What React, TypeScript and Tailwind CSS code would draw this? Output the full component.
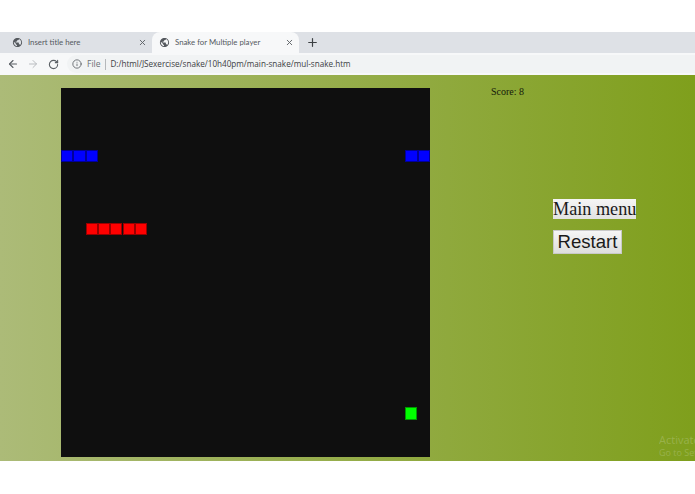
import React from 'react';
import { ArrowLeft, ArrowRight, Info, Plus, RotateCw, X } from 'lucide-react';

// board cells are 12.3px, 30 x 30
const CELL = 12.3;

const blue = [
  [0, 5.05],
  [1, 5.05],
  [2, 5.05],
  [28, 5.05],
  [29, 5.05],
];
const red = [
  [2, 10.97],
  [3, 10.97],
  [4, 10.97],
  [5, 10.97],
  [6, 10.97],
];

const Cell: React.FC<{ pos: number[]; color: string }> = ({ pos, color }) => (
  <div
    className={`absolute border border-black/40 ${color}`}
    style={{ left: pos[0] * CELL, top: pos[1] * CELL, width: CELL, height: CELL }}
  />
);

const Favicon = () => (
  <svg width="11" height="11" viewBox="0 0 24 24" className="shrink-0 fill-[#54585d]">
    <path d="M12 2C6.48 2 2 6.48 2 12s4.48 10 10 10 10-4.48 10-10S17.52 2 12 2zm-1 17.93c-3.95-.49-7-3.85-7-7.93 0-.62.08-1.21.21-1.79L9 15v1c0 1.1.9 2 2 2v1.93zm6.9-2.54c-.26-.81-1-1.39-1.9-1.39h-1v-3c0-.55-.45-1-1-1H8v-2h2c.55 0 1-.45 1-1V7h2c1.1 0 2-.9 2-2v-.41c2.93 1.19 5 4.06 5 7.41 0 2.08-.8 3.97-2.1 5.39z" />
  </svg>
);

const Tab: React.FC<{ title: string; active?: boolean }> = ({ title, active }) => (
  <div
    className={`flex h-[21px] w-[147px] items-center pl-[7px] pr-[5px] ${
      active ? 'rounded-t-lg bg-[#f7f8f9]' : ''
    }`}
  >
    <Favicon />
    <span className="ml-[5px] flex-1 truncate font-['Lato',sans-serif] text-[7.8px] text-[#55595f]">{title}</span>
    <X size={9} strokeWidth={2.5} className="shrink-0 text-[#5f6368]" />
  </div>
);

export default function App() {
  return (
    <div className="flex h-[494px] w-[695px] flex-col overflow-hidden bg-white font-['Open_Sans',sans-serif]">
      <div className="h-8 shrink-0 bg-white" />

      <div className="flex h-[21px] shrink-0 items-center bg-[#dee1e6] pl-[5px]">
        <Tab title="Insert title here" />
        <Tab title="Snake for Multiple player" active />
        <Plus size={13} strokeWidth={2.2} className="ml-[7px] text-[#3c4043]" />
      </div>

      <div className="flex h-[22px] shrink-0 items-center bg-[#f7f8f9] pl-[7px]">
        <ArrowLeft size={12} strokeWidth={2.2} className="text-[#5a5f65]" />
        <ArrowRight size={12} strokeWidth={2} className="ml-2 text-[#b9bcc0]" />
        <RotateCw size={11} strokeWidth={2.4} className="ml-[9px] text-[#5a5f65]" />
        <div className="ml-2 flex h-[18px] flex-1 items-center rounded-l-full bg-[#f1f3f4] pl-[5px]">
          <Info size={10} className="text-[#5a5f65]" />
          <span className="ml-[5px] text-[8.5px] text-[#6b7075]">File</span>
          <div className="ml-[5px] h-[11px] w-px bg-[#b5b8bb]" />
          <span className="ml-1 text-[8.15px] text-[#3c4043]">
            D:/html/JSexercise/snake/10h40pm/main-snake/mul-snake.htm
          </span>
        </div>
      </div>

      <div className="relative flex h-[386px] shrink-0 bg-linear-to-r/srgb from-[#acbb78] to-[#7f9f1c] pl-[61px] pt-[13px]">
        <div className="relative h-[369px] w-[369px] shrink-0 bg-[#0f0f0f]">
          {blue.map((p) => (
            <Cell key={p.join()} pos={p} color="bg-[#0000ff]" />
          ))}
          {red.map((p) => (
            <Cell key={p.join()} pos={p} color="bg-[#ff0000]" />
          ))}
          <Cell pos={[27.97, 25.97]} color="bg-[#00ff00]" />
        </div>

        <div className="ml-[61px] flex flex-col items-start">
          <p className="mt-[-2px] font-['Liberation_Serif',serif] text-[10px] leading-[12px] text-[#14180a]">
            Score: 8
          </p>
          <button className="ml-[62px] mt-[101px] h-5 w-[83px] whitespace-nowrap bg-gradient-to-b from-[#f5f5f5] to-[#e2e2e2] font-['Liberation_Serif',serif] text-[18.2px] leading-5 text-[#1a1a1a]">
            Main menu
          </button>
          <button className="ml-[62px] mt-[11px] h-6 w-[69px] border border-[#c9c9c9] bg-gradient-to-b from-[#f5f5f5] to-[#dedede] font-['Liberation_Sans',sans-serif] text-[18.6px] leading-5 text-[#1a1a1a]">
            Restart
          </button>
        </div>

        <div className="absolute left-[659px] top-[358px] w-9 overflow-hidden whitespace-nowrap text-white/20">
          <p className="text-[11px] leading-[14px]">Activate Windows</p>
          <p className="text-[9px] leading-[12px]">Go to Settings</p>
        </div>
      </div>

      <div className="flex-1 bg-white" />
    </div>
  );
}
